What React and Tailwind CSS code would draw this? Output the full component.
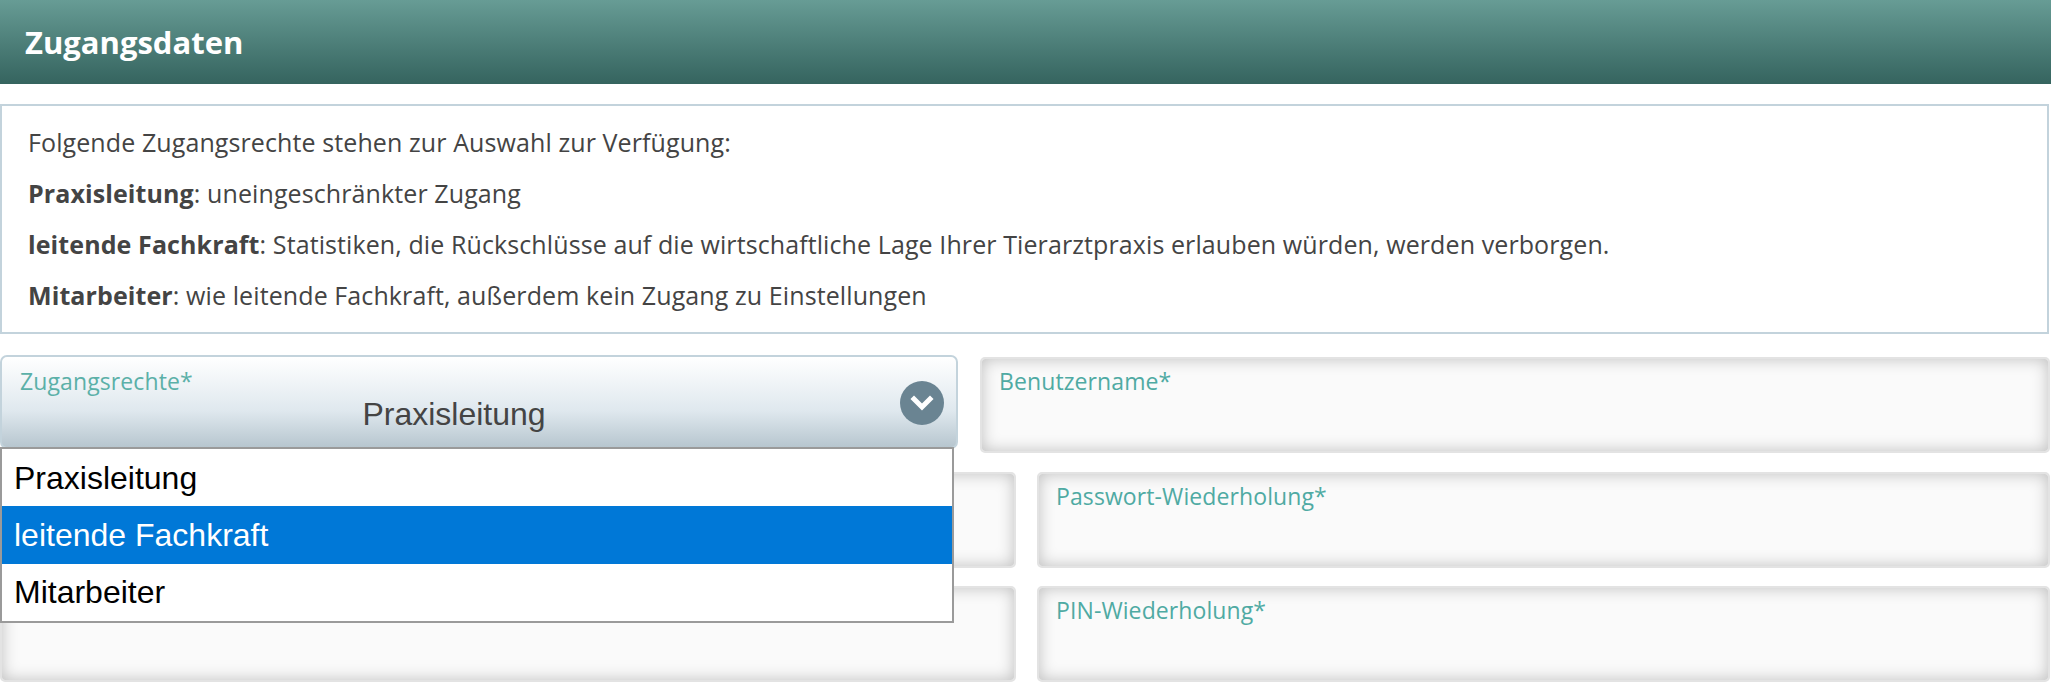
const ubuntu = "font-['Open_Sans','Noto_Sans',sans-serif]";

function Field({ label, className, labelClassName = "" }) {
  return (
    <div className={`h-[96px] rounded-[5px] border-2 border-[#e3e3e3] bg-[#fafafa] shadow-[inset_0_0_16px_rgba(0,0,0,0.24)] px-[17px] pt-[4px] ${className}`}>
      <span className={`${ubuntu} block text-[23px] leading-[36px] tracking-[0.1px] text-[#4faaa3] ${labelClassName}`}>{label}</span>
    </div>
  );
}

export default function App() {
  return (
    <div className="relative min-h-[683px] w-full overflow-hidden bg-white font-['Liberation_Sans',Arial,sans-serif]">
      <header className="flex h-[84px] items-center bg-gradient-to-b from-[#679c95] to-[#35645f] pl-[25px]">
        <h1 className={`${ubuntu} text-[31px] font-bold text-white`}>Zugangsdaten</h1>
      </header>

      <section className={`${ubuntu} mt-[20px] mr-[2px] flex h-[230px] flex-col gap-[21px] border-2 border-[#c3d3dc] pl-[26px] pt-[21px] text-[25px] leading-[30px] tracking-[0.1px] text-[#444]`}>
        <p>Folgende Zugangsrechte stehen zur Auswahl zur Verfügung:</p>
        <p><b>Praxisleitung</b>: uneingeschränkter Zugang</p>
        <p><b>leitende Fachkraft</b>: Statistiken, die Rückschlüsse auf die wirtschaftliche Lage Ihrer Tierarztpraxis erlauben würden, werden verborgen.</p>
        <p><b>Mitarbeiter</b>: wie leitende Fachkraft, außerdem kein Zugang zu Einstellungen</p>
      </section>

      <div className="mt-[21px] flex items-start gap-[22px] pr-px">
        <div className="relative w-[958px] shrink-0">
          <div className="h-[94px] rounded-[7px] border-2 border-[#c3d3dc] bg-gradient-to-b from-[#ffffff] via-[#dfe8ee] via-60% to-[#b7c6cf] px-[18px] pt-[6px]">
            <span className={`${ubuntu} block text-[23px] leading-[36px] tracking-[0.1px] text-[#5bb0a8]`}>Zugangsrechte*</span>
            <div className="pr-[50px] -mt-[3px] text-center text-[32px] leading-[36px] text-[#444]">Praxisleitung</div>
          </div>
          <span className="absolute right-[14px] top-[26px] flex h-[44px] w-[44px] items-center justify-center rounded-full bg-[#6a8492]">
            <svg width="24" height="16" viewBox="0 0 24 16" fill="none" stroke="white" strokeWidth="5" strokeLinecap="square">
              <path d="M4 4l8 8 8-8" />
            </svg>
          </span>
        </div>
        <Field label="Benutzername*" className="mt-[2px] flex-1" />
      </div>

      <div className="mt-[19px] flex gap-[21px] pr-px">
        <Field label="Passwort*" className="w-[1016px] shrink-0" />
        <Field label="Passwort-Wiederholung*" className="flex-1" />
      </div>

      <div className="mt-[18px] flex gap-[21px] pr-px">
        <Field label="PIN (4-stellig)*" labelClassName="-mt-[3px]" className="w-[1016px] shrink-0" />
        <Field label="PIN-Wiederholung*" className="flex-1" />
      </div>

      <ul className="absolute left-0 top-[447px] w-[954px] border-2 border-[#9a9a9a] bg-white text-[32px] text-black">
        <li className="flex h-[57px] items-center pl-[12px]">Praxisleitung</li>
        <li className="flex h-[58px] items-center bg-[#0078d7] pl-[12px] text-white">leitende Fachkraft</li>
        <li className="flex h-[57px] items-center pb-px pl-[12px]">Mitarbeiter</li>
      </ul>
    </div>
  );
}
